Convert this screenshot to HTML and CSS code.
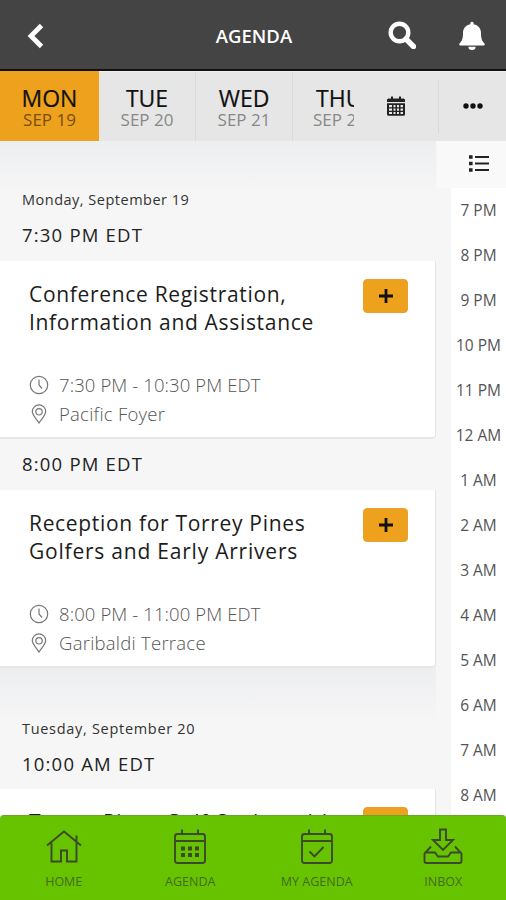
FILE: index.html
```html
<!DOCTYPE html>
<html lang="en">
<head>
<meta charset="utf-8">
<title>Agenda</title>
<link rel="stylesheet" href="styles.css">
</head>
<body>
<div class="app">
  <header class="topbar">
    <svg class="back" viewBox="0 0 18 26"><path d="M14.500 2.500 4 13l10.500 10.500" fill="none" stroke="#fff" stroke-width="4.800"/></svg>
    <h1 class="topbar-title">AGENDA</h1>
    <svg class="search" viewBox="0 0 28 28"><circle cx="11.500" cy="11.500" r="8.800" fill="none" stroke="#fff" stroke-width="4.400"/><path d="m18 18 7.500 7.500" stroke="#fff" stroke-width="5.400" stroke-linecap="round"/></svg>
    <svg class="bell" viewBox="0 0 26 29"><path d="M11.300 2.500a1.700 1.700 0 0 1 3.400 0v.8c4.500.9 7.300 4.300 7.300 8.700 0 6.200 1.200 8 3.300 10.200.8.900.4 2.300-1 2.300H1.700c-1.400 0-1.800-1.400-1-2.300C2.800 20 4 18.200 4 12c0-4.400 2.800-7.800 7.300-8.700ZM9.400 25.700h7.200a3.600 3.200 0 0 1-7.200 0Z" fill="#fff"/></svg>
  </header>
  <nav class="days">
    <div class="day active"><b>MON</b><span>SEP 19</span></div>
    <div class="day"><b>TUE</b><span>SEP 20</span></div>
    <div class="day"><b>WED</b><span>SEP 21</span></div>
    <div class="day cut"><b>THU</b><span>SEP 22</span></div>
    <div class="pick"><svg viewBox="0 0 18 20"><path fill="#222" fill-rule="evenodd" d="M1.500 2.500H4V.500h2v2h6v-2h2v2h2.500Q18 2.500 18 4v2H0V4Q0 2.500 1.500 2.500ZM0 7.200h18v11q0 1.600-1.600 1.600H1.600Q0 19.800 0 18.200ZM2 9v2.300h3V9Zm4.500 0v2.300h2V9ZM10 9v2.300h2V9Zm3.500 0v2.300H16V9ZM2 12.500v2.300h3v-2.300Zm4.500 0v2.300h2v-2.300Zm3.500 0v2.300h2v-2.300Zm3.500 0v2.300H16v-2.300ZM2 16v2h3v-2Zm4.500 0v2h2v-2Zm3.500 0v2h2v-2Zm3.500 0v2H16v-2Z"/></svg></div>
    <div class="more"><svg viewBox="0 0 20 6"><circle cx="3" cy="3" r="2.700"/><circle cx="10" cy="3" r="2.700"/><circle cx="17" cy="3" r="2.700"/></svg></div>
  </nav>
  <main class="content">
    <div class="sessions">
      <section class="group">
        <p class="date">Monday, September 19</p>
        <h2 class="time">7:30 PM EDT</h2>
      </section>
      <article class="card">
        <div class="head"><h3><span>Conference Registration,</span><span>Information and Assistance</span></h3><button class="add"><svg viewBox="0 0 14 14"><path d="M7 0v14M0 7h14"/></svg></button></div>
        <p class="meta"><svg viewBox="0 0 20 20"><circle cx="10" cy="10" r="8.700"/><path d="M10 4.500V10l3 3.500"/></svg><span>7:30 PM - 10:30 PM EDT</span></p>
        <p class="meta place"><svg viewBox="0 0 20 20"><path d="M10 19C8 15.500 3.300 11.500 3.300 7.600a6.700 6.700 0 0 1 13.400 0C16.700 11.500 12 15.500 10 19Z"/><circle cx="10" cy="7.800" r="3.200"/></svg><span>Pacific Foyer</span></p>
      </article>
      <section class="slot"><h2 class="time">8:00 PM EDT</h2></section>
      <article class="card">
        <div class="head"><h3><span>Reception for Torrey Pines</span><span class="loose">Golfers and Early Arrivers</span></h3><button class="add"><svg viewBox="0 0 14 14"><path d="M7 0v14M0 7h14"/></svg></button></div>
        <p class="meta"><svg viewBox="0 0 20 20"><circle cx="10" cy="10" r="8.700"/><path d="M10 4.500V10l3 3.500"/></svg><span>8:00 PM - 11:00 PM EDT</span></p>
        <p class="meta place"><svg viewBox="0 0 20 20"><path d="M10 19C8 15.500 3.300 11.500 3.300 7.600a6.700 6.700 0 0 1 13.400 0C16.700 11.500 12 15.500 10 19Z"/><circle cx="10" cy="7.800" r="3.200"/></svg><span>Garibaldi Terrace</span></p>
      </article>
      <section class="group next">
        <p class="date wide">Tuesday, September 20</p>
        <h2 class="time">10:00 AM EDT</h2>
      </section>
      <article class="card">
        <div class="head"><h3><span>Torrey Pines Golf Outing with</span></h3><button class="add"><svg viewBox="0 0 14 14"><path d="M7 0v14M0 7h14"/></svg></button></div>
      </article>
    </div>
    <aside class="rail">
      <div class="toggle"><svg viewBox="0 0 20 17"><path d="M0 2h3.600M0 8.500h3.600M0 15h3.600" stroke-width="3.400"/><path d="M6 2h14M6 8.500h14M6 15h14" stroke-width="2.200"/></svg></div>
      <ul class="hours">
        <li>7 PM</li><li>8 PM</li><li>9 PM</li><li>10 PM</li><li>11 PM</li><li>12 AM</li><li>1 AM</li><li>2 AM</li><li>3 AM</li><li>4 AM</li><li>5 AM</li><li>6 AM</li><li>7 AM</li><li>8 AM</li>
      </ul>
    </aside>
  </main>
  <nav class="tabbar">
    <div class="tab"><svg viewBox="0 0 40 38"><path d="M3 17.500 20 3.500l17 14M7.500 15v18.500h9.500V22.500h6v11h9.500V8.500h-.1M32.500 7.500V15"/></svg><span>HOME</span></div>
    <div class="tab"><svg viewBox="0 0 40 38"><rect x="5" y="6" width="30" height="29" rx="2.500"/><path d="M5 13h30M12 1.500V6M28 1.500V6"/><path class="dots" d="M11 20.500h4m3 0h4m3 0h4M11 27h4m3 0h4m3 0h4"/></svg><span>AGENDA</span></div>
    <div class="tab"><svg viewBox="0 0 40 38"><rect x="5" y="6" width="30" height="29" rx="2.500"/><path d="M5 13h30M12 1.500V6M28 1.500V6M12.500 23.500l5 5 9-9.500"/></svg><span>MY AGENDA</span></div>
    <div class="tab"><svg viewBox="0 0 40 38"><path d="M17 1.500h6v10.500h7L20 22 10 12h7ZM8 18.500l-6.500 7V33q0 2 2 2h33q2 0 2-2v-7.500l-6.500-7M1.500 24.500h10.500l3 4h10l3-4h10.500"/></svg><span>INBOX</span></div>
  </nav>
</div>
</body>
</html>
```

FILE: styles.css
```css
* { box-sizing: border-box; margin: 0; padding: 0; }
body { width: 506px; height: 900px; overflow: hidden; font-family: "Open Sans", sans-serif; color: #222; }
svg { display: block; }
.app { height: 900px; display: flex; flex-direction: column; background: #f6f6f6; }

.topbar { height: 71px; flex: none; display: grid; grid-template-columns: 97px 1fr 57px 69px; align-items: center; background: #444; border-bottom: 2px solid #111; }
.back { width: 18px; height: 26px; margin-left: 27px; margin-top: 2px; }
.topbar-title { color: #fff; font-size: 18.500px; line-height: 24px; font-weight: 600; text-align: center; padding-left: 31px; padding-top: 3px; }
.search { width: 28px; height: 28px; justify-self: end; margin-right: 21px; }
.bell { width: 26px; height: 29px; margin-left: 22px; margin-top: 1px; }

.days { height: 70px; flex: none; display: flex; background: #e6e6e6; border-top: 1px solid #f0f0f0; }
.day { width: 97px; flex: none; display: flex; flex-direction: column; align-items: center; padding-top: 13px; border-right: 1px solid #dadada; overflow: hidden; white-space: nowrap; }
.day b { font-size: 23px; line-height: 26px; font-weight: 400; color: #111; -webkit-text-stroke: .2px #111; }
.day span { font-size: 17px; line-height: 18px; color: #888; }
.day.active { width: 99px; background: #eea11c; border: 0; margin-top: -1px; padding-top: 14px; }
.day.active span { color: #765010; }
.day.cut { width: 61px; align-items: flex-start; border: 0; padding-left: 20px; }
.day.cut b { padding-left: 3px; }
.pick { width: 84px; display: flex; align-items: center; padding-left: 33px; }
.pick svg { width: 18px; height: 20px; margin-bottom: 2px; }
.more { width: 68px; margin: 8px 0; border-left: 1px solid #d8d8d8; display: flex; align-items: center; justify-content: center; }
.more svg { width: 20px; height: 6px; fill: #111; margin-bottom: 1px; }

.content { flex: 1; min-height: 0; display: flex; overflow: hidden; }
.sessions { width: 436px; flex: none; }
.group { height: 120px; padding: 47px 22px 0; background: linear-gradient(#edeef0, #f6f6f6 55px); }
.group.next { height: 121px; padding-top: 49px; }
.date { font-size: 14.500px; line-height: 24px; color: #333; white-space: nowrap; letter-spacing: .5px; }
.date.wide { letter-spacing: .7px; }
.time { font-size: 18.500px; line-height: 28px; font-weight: 400; color: #222; letter-spacing: 1.200px; margin-top: 10px; white-space: nowrap; }
.group .time { margin-top: 9px; }
.slot { height: 51px; padding: 11px 22px 0; }
.slot .time { margin: 0; }
.card { width: 436px; height: 178px; background: #fff; border-right: 1px solid #e4e4e4; border-bottom: 2px solid #e6e6e6; border-bottom-right-radius: 4px; padding: 18px 27px 0 29px; }
.head { display: flex; justify-content: space-between; height: 91px; }
h3 { font-size: 21px; line-height: 28px; font-weight: 400; color: #1c1c1c; white-space: nowrap; padding-top: 1px; }
h3 span { display: block; letter-spacing: .68px; }
h3 .loose { letter-spacing: .780px; }
.add { width: 45px; height: 34px; flex: none; border: 1px solid #e9a132; border-radius: 4px; background: #eea11c; display: flex; align-items: center; justify-content: center; }
.add svg { width: 14px; height: 14px; stroke: #111; stroke-width: 2.800; }
.meta { display: flex; align-items: center; height: 29px; gap: 10px; font-size: 18.500px; color: #555; font-weight: 300; white-space: nowrap; letter-spacing: .1px; }
.meta.place { letter-spacing: .250px; }
.meta svg { width: 20px; height: 20px; fill: none; stroke: #777; stroke-width: 1.200; }

.rail { width: 70px; background: #fff; border-left: 15px solid #f6f6f6; }
.toggle { height: 47px; margin-left: -14px; background: #f9f9f9; display: flex; align-items: center; padding: 0 0 2px 32px; }
.toggle svg { width: 20px; height: 17px; stroke: #222; }
.hours { list-style: none; }
.hours li { height: 45px; line-height: 45px; font-size: 15.500px; text-align: center; color: #555; }

.tabbar { height: 85px; flex: none; display: grid; grid-template-columns: repeat(4, 1fr); background: #67c300; border-top: 1px solid #66a82a; border-radius: 4px 4px 0 0; }
.tab { display: flex; flex-direction: column; align-items: center; padding: 12px 0 0 1px; }
.tab svg { width: 40px; height: 38px; fill: none; stroke: #3b4a2d; stroke-width: 1.900; }
.tab .dots { stroke-width: 4; }
.tab span { margin-top: 7px; font-size: 12.500px; line-height: 18px; color: #426b1c; white-space: nowrap; }
```
